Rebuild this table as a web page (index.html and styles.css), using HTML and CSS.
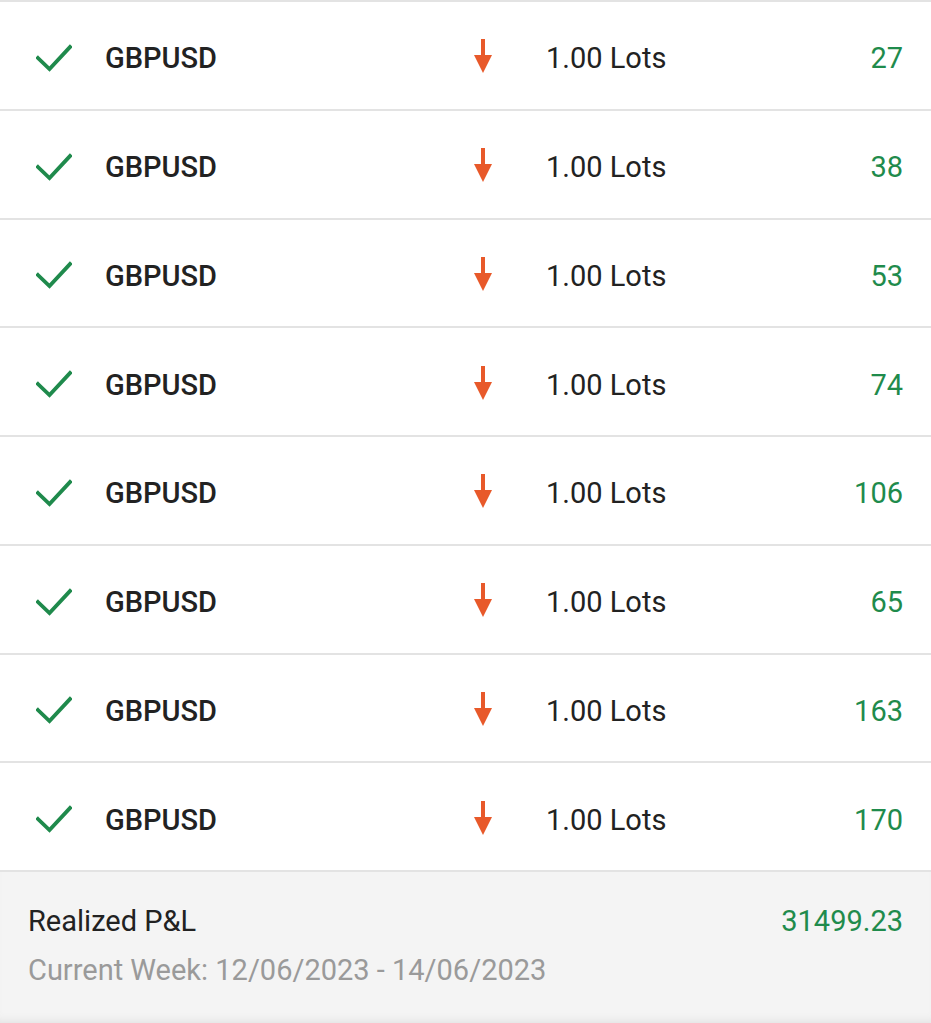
FILE: index.html
```html
<!DOCTYPE html>
<html>
<head>
<meta charset="utf-8">
<link rel="stylesheet" href="styles.css">
</head>
<body>
<div class="list">
  <div class="row"><span class="check"><svg viewBox="0 0 36 28" width="36" height="28"><path d="M2 14 L13.5 25 L34 3" fill="none" stroke="#1f8a4c" stroke-width="3.8" stroke-linecap="square"/></svg></span><span class="sym">GBPUSD</span><span class="dir"><svg viewBox="0 0 20 36" width="20" height="36"><rect x="8" y="0" width="4" height="20" fill="#e8592a"/><path d="M1 16 L19 16 L10 34 Z" fill="#e8592a"/></svg></span><span class="lots">1.00 Lots</span><span class="pl">27</span></div>
  <div class="row"><span class="check"><svg viewBox="0 0 36 28" width="36" height="28"><path d="M2 14 L13.5 25 L34 3" fill="none" stroke="#1f8a4c" stroke-width="3.8" stroke-linecap="square"/></svg></span><span class="sym">GBPUSD</span><span class="dir"><svg viewBox="0 0 20 36" width="20" height="36"><rect x="8" y="0" width="4" height="20" fill="#e8592a"/><path d="M1 16 L19 16 L10 34 Z" fill="#e8592a"/></svg></span><span class="lots">1.00 Lots</span><span class="pl">38</span></div>
  <div class="row"><span class="check"><svg viewBox="0 0 36 28" width="36" height="28"><path d="M2 14 L13.5 25 L34 3" fill="none" stroke="#1f8a4c" stroke-width="3.8" stroke-linecap="square"/></svg></span><span class="sym">GBPUSD</span><span class="dir"><svg viewBox="0 0 20 36" width="20" height="36"><rect x="8" y="0" width="4" height="20" fill="#e8592a"/><path d="M1 16 L19 16 L10 34 Z" fill="#e8592a"/></svg></span><span class="lots">1.00 Lots</span><span class="pl">53</span></div>
  <div class="row"><span class="check"><svg viewBox="0 0 36 28" width="36" height="28"><path d="M2 14 L13.5 25 L34 3" fill="none" stroke="#1f8a4c" stroke-width="3.8" stroke-linecap="square"/></svg></span><span class="sym">GBPUSD</span><span class="dir"><svg viewBox="0 0 20 36" width="20" height="36"><rect x="8" y="0" width="4" height="20" fill="#e8592a"/><path d="M1 16 L19 16 L10 34 Z" fill="#e8592a"/></svg></span><span class="lots">1.00 Lots</span><span class="pl">74</span></div>
  <div class="row"><span class="check"><svg viewBox="0 0 36 28" width="36" height="28"><path d="M2 14 L13.5 25 L34 3" fill="none" stroke="#1f8a4c" stroke-width="3.8" stroke-linecap="square"/></svg></span><span class="sym">GBPUSD</span><span class="dir"><svg viewBox="0 0 20 36" width="20" height="36"><rect x="8" y="0" width="4" height="20" fill="#e8592a"/><path d="M1 16 L19 16 L10 34 Z" fill="#e8592a"/></svg></span><span class="lots">1.00 Lots</span><span class="pl">106</span></div>
  <div class="row"><span class="check"><svg viewBox="0 0 36 28" width="36" height="28"><path d="M2 14 L13.5 25 L34 3" fill="none" stroke="#1f8a4c" stroke-width="3.8" stroke-linecap="square"/></svg></span><span class="sym">GBPUSD</span><span class="dir"><svg viewBox="0 0 20 36" width="20" height="36"><rect x="8" y="0" width="4" height="20" fill="#e8592a"/><path d="M1 16 L19 16 L10 34 Z" fill="#e8592a"/></svg></span><span class="lots">1.00 Lots</span><span class="pl">65</span></div>
  <div class="row"><span class="check"><svg viewBox="0 0 36 28" width="36" height="28"><path d="M2 14 L13.5 25 L34 3" fill="none" stroke="#1f8a4c" stroke-width="3.8" stroke-linecap="square"/></svg></span><span class="sym">GBPUSD</span><span class="dir"><svg viewBox="0 0 20 36" width="20" height="36"><rect x="8" y="0" width="4" height="20" fill="#e8592a"/><path d="M1 16 L19 16 L10 34 Z" fill="#e8592a"/></svg></span><span class="lots">1.00 Lots</span><span class="pl">163</span></div>
  <div class="row"><span class="check"><svg viewBox="0 0 36 28" width="36" height="28"><path d="M2 14 L13.5 25 L34 3" fill="none" stroke="#1f8a4c" stroke-width="3.8" stroke-linecap="square"/></svg></span><span class="sym">GBPUSD</span><span class="dir"><svg viewBox="0 0 20 36" width="20" height="36"><rect x="8" y="0" width="4" height="20" fill="#e8592a"/><path d="M1 16 L19 16 L10 34 Z" fill="#e8592a"/></svg></span><span class="lots">1.00 Lots</span><span class="pl">170</span></div>
</div>
<div class="footer">
  <div class="frow"><span class="flabel">Realized P&amp;L</span><span class="ftotal">31499.23</span></div>
  <div class="fdate">Current Week: 12/06/2023 - 14/06/2023</div>
</div>
</body>
</html>
```

FILE: styles.css
```css
html, body {
  margin: 0;
  padding: 0;
  background: #ffffff;
}
body {
  width: 931px;
  height: 1023px;
  overflow: hidden;
  font-family: Roboto, "Noto Sans", sans-serif;
  display: flex;
  flex-direction: column;
}
.list {
  border-top: 2px solid #e3e3e3;
}
.row {
  height: 106.75px;
  border-bottom: 2px solid #e3e3e3;
  display: flex;
  align-items: center;
  padding: 0 28px 0 36px;
}
.check {
  width: 69px;
  display: flex;
  align-items: center;
  padding-top: 5px;
}
.check svg, .dir svg { display: block; }
.sym {
  width: 368px;
  font-size: 29px;
  font-weight: 500;
  color: #222222;
  padding-top: 6px;
}
.dir {
  width: 73px;
  display: flex;
  padding-top: 4px;
}
.lots {
  font-size: 29px;
  color: #222222;
  padding-top: 6px;
}
.pl {
  margin-left: auto;
  font-size: 29px;
  color: #1f8b4c;
  padding-top: 6px;
}
.footer {
  flex: 1;
  background: #f4f4f4;
  padding: 32px 28px 0 28px;
  box-shadow: inset 0 -8px 8px -6px #e2e2e2;
}
.frow {
  display: flex;
  justify-content: space-between;
  align-items: center;
}
.flabel {
  font-size: 29px;
  color: #222222;
}
.ftotal {
  font-size: 29px;
  color: #1f8b4c;
}
.fdate {
  font-size: 29px;
  color: #9a9a9a;
  margin-top: 15px;
}
```
